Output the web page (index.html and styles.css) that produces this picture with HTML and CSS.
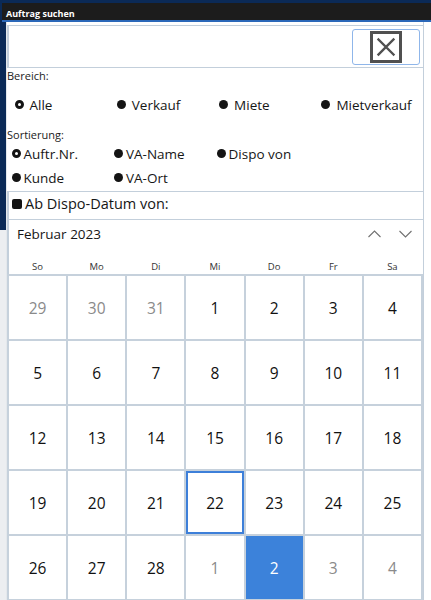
FILE: index.html
```html
<!doctype html>
<html lang="de">
	<head>
		<meta charset="UTF-8" />
		<title>Auftrag suchen</title>
		<link rel="stylesheet" href="styles.css">
	</head>
	<body>
		<div class="titlebar">Auftrag suchen</div>
		<div class="frame">
			<div class="edge-left"></div>
			<div class="dialog">
				<div class="search">
					<button class="clear-btn" title="Leeren">
						<svg width="32" height="32" viewBox="0 0 32 32">
							<rect x="1.5" y="1.5" width="29" height="29" fill="none" stroke="#505050" stroke-width="3" />
							<path d="M8.5 8.5 L23.5 23.5 M23.5 8.5 L8.5 23.5" stroke="#505050" stroke-width="2.4" stroke-linecap="square" />
						</svg>
					</button>
				</div>

				<div class="group-label">Bereich:</div>
				<div class="radio-row area">
					<label class="radio"><span class="dot checked"></span>Alle</label>
					<label class="radio"><span class="dot"></span>Verkauf</label>
					<label class="radio"><span class="dot"></span>Miete</label>
					<label class="radio"><span class="dot"></span>Mietverkauf</label>
				</div>

				<div class="group-label">Sortierung:</div>
				<div class="radio-row sort">
					<label class="radio"><span class="dot checked"></span>Auftr.Nr.</label>
					<label class="radio"><span class="dot"></span>VA-Name</label>
					<label class="radio"><span class="dot"></span>Dispo von</label>
					<label class="radio"><span class="dot"></span>Kunde</label>
					<label class="radio"><span class="dot"></span>VA-Ort</label>
				</div>

				<div class="check-row">
					<span class="checkbox"></span>Ab Dispo-Datum von:
				</div>

				<div class="calendar">
					<div class="cal-head">
						<span class="month">Februar 2023</span>
						<span class="nav">
							<svg width="13" height="8" viewBox="0 0 13 8"><path d="M0.5 7 L6.5 1 L12.5 7" fill="none" stroke="#707070" stroke-width="1.1" /></svg>
							<svg width="13" height="8" viewBox="0 0 13 8"><path d="M0.5 1 L6.5 7 L12.5 1" fill="none" stroke="#707070" stroke-width="1.1" /></svg>
						</span>
					</div>
					<div class="weekdays">
						<span>So</span><span>Mo</span><span>Di</span><span>Mi</span><span>Do</span><span>Fr</span><span>Sa</span>
					</div>
					<div class="days" id="days"></div>
				</div>
			</div>
			<div class="edge-right"></div>
		</div>

		<script>
			const days = [
				[29, 'other'], [30, 'other'], [31, 'other'], [1], [2], [3], [4],
				[5], [6], [7], [8], [9], [10], [11],
				[12], [13], [14], [15], [16], [17], [18],
				[19], [20], [21], [22, 'today'], [23], [24], [25],
				[26], [27], [28], [1, 'other'], [2, 'selected'], [3, 'other'], [4, 'other']
			]

			const grid = document.getElementById('days')
			days.forEach(([n, state]) => {
				const cell = document.createElement('div')
				cell.className = 'day' + (state ? ' ' + state : '')
				cell.textContent = n
				grid.appendChild(cell)
			})
		</script>
	</body>
</html>
```

FILE: styles.css
```css
body {
	margin: 0;
	padding-top: 3px;
	width: 431px;
	height: 600px;
	overflow: hidden;
	background-color: #0b2a57;
	font-family: "Open Sans", "Noto Sans", sans-serif;
	color: #161616;
}
.titlebar {
	margin-left: 2px;
	height: 13px;
	padding: 4px 0 0 4px;
	background-color: #1c1c1c;
	border-bottom: 2px solid #2b68b9;
	color: white;
	font-size: 9px;
	font-weight: bold;
	line-height: 13px;
}
.frame {
	display: flex;
	height: 578px;
}
.edge-left {
	width: 6px;
	border-right: 1px solid #e4e8ec;
	background: linear-gradient(#0b2a57 0 208px, #eceef1 208px);
}
.edge-right {
	width: 7px;
	background-color: #ffffff;
}
.dialog {
	width: 416px;
	padding-top: 3px;
	background-color: white;
	border-right: 1px solid #c3cfdb;
}
.search {
	height: 43px;
	box-sizing: border-box;
	display: flex;
	justify-content: flex-end;
	padding: 3px;
	border: 1px solid #c3cfdb;
	border-left-width: 2px;
	border-right: none;
}
.clear-btn {
	width: 68px;
	height: 36px;
	padding: 0;
	display: flex;
	align-items: center;
	justify-content: center;
	background-color: white;
	border: 1px solid #8fb6ea;
	border-radius: 3px;
}
.group-label {
	height: 15px;
	font-size: 11px;
	line-height: 15px;
	color: #222;
}
.radio-row {
	display: grid;
	font-size: 13.5px;
}
.radio-row.area {
	height: 44px;
	padding-left: 7.5px;
	grid-template-columns: repeat(4, 102.3px);
	align-items: center;
}
.radio-row.sort {
	padding-left: 4.5px;
	padding-bottom: 1px;
	grid-template-columns: repeat(3, 102.5px);
	grid-auto-rows: 24px;
	align-items: center;
}
.radio {
	display: flex;
	align-items: center;
	gap: 3px;
	white-space: nowrap;
}
.area .radio {
	gap: 6px;
}
.dot {
	width: 9px;
	height: 9px;
	margin-bottom: 2px;
	box-sizing: border-box;
	border-radius: 50%;
	background-color: #141414;
	flex: none;
}
.dot.checked {
	border: 3px solid #141414;
	background-color: white;
}
.check-row {
	height: 29px;
	box-sizing: border-box;
	display: flex;
	align-items: center;
	gap: 3px;
	padding: 0 0 4px 3px;
	border: 1px solid #c3cfdb;
	border-left-width: 2px;
	border-right: none;
	font-size: 14.5px;
}
.checkbox {
	width: 10px;
	height: 10px;
	border-radius: 2px;
	background-color: #141414;
}
.cal-head {
	height: 27px;
	display: flex;
	align-items: center;
	justify-content: space-between;
	padding: 0 11px 0 8px;
	border-left: 2px solid #c3cfdb;
}
.month {
	font-size: 13.5px;
}
.nav {
	display: flex;
	gap: 18px;
	padding-top: 1px;
}
.weekdays {
	height: 27px;
	box-sizing: border-box;
	display: grid;
	grid-template-columns: repeat(7, 1fr);
	gap: 2px;
	padding: 0 2px 1px 0;
	align-items: end;
	border-left: 2px solid #c3cfdb;
	font-size: 9.5px;
	line-height: 12px;
	text-align: center;
	color: #333;
}
.days {
	display: grid;
	grid-template-columns: repeat(7, 1fr);
	grid-auto-rows: 63px;
	gap: 2px;
	padding: 2px;
	background-color: #c6d1dc;
}
.day {
	display: flex;
	align-items: center;
	justify-content: center;
	background-color: white;
	font-size: 15.5px;
	color: #111;
}
.day.other {
	color: #8a8a8a;
}
.day.today {
	box-shadow: inset 0 0 0 2px #3d7fd9;
}
.day.selected {
	background-color: #3c82da;
	color: white;
}
```
